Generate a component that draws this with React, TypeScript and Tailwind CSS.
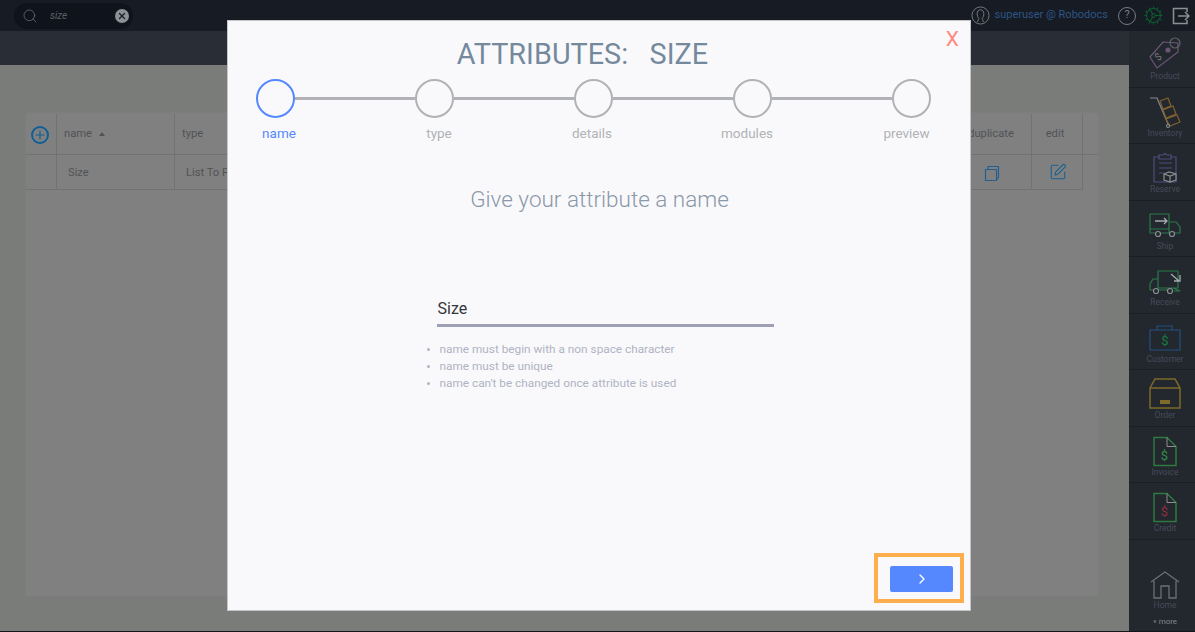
import { ReactNode } from "react";
import { ChevronRight, Cog, Plus, Search, SquarePen, X } from "lucide-react";

const steps = [
  { label: "name", width: "w-[34px]", gap: "" },
  { label: "type", width: "w-[26px]", gap: "ml-[130px]" },
  { label: "details", width: "w-[40px]", gap: "ml-[120px]" },
  { label: "modules", width: "w-[52px]", gap: "ml-[109px]" },
  { label: "preview", width: "w-[47px]", gap: "ml-[110px]" },
];

const rules = [
  "name must begin with a non space character",
  "name must be unique",
  "name can't be changed once attribute is used",
];

const NavItem = ({ label, children }: { label: string; children: ReactNode }) => (
  <div className="flex h-[56.5px] flex-col items-center border-b border-[#1b1f25] pl-[6px] pt-[5px]">
    <div className="h-[36px] w-[36px]">{children}</div>
    <span className="mt-[-2px] text-[8.5px] leading-[12px] text-[#454c5a]">{label}</span>
  </div>
);

const Doc = ({ color }: { color: string }) => (
  <svg viewBox="0 0 36 36" className="h-full w-full" fill="none">
    <path d="M7 5.500h13l9 9v19H7z" stroke="#2f7a3f" strokeWidth="1.5" />
    <path d="M20 5.500v9h9" stroke="#8c9094" strokeWidth="1" />
    <text x="17.500" y="28" textAnchor="middle" fontSize="13" fill={color} fontFamily="Roboto, sans-serif">$</text>
  </svg>
);

export default function App() {
  return (
    <div className="relative flex h-[632px] w-[1195px] flex-col overflow-hidden bg-[#7a7c7a] font-['Roboto',sans-serif]">
      {/* Top bar */}
      <header className="flex h-[31px] shrink-0 items-center bg-[#171b24] pl-[14px] pr-[5px]">
        <div className="flex h-[26px] w-[119px] items-center rounded-full bg-[#0f131b] pl-[8px] pr-[4px]">
          <Search size={16} strokeWidth={1.2} className="text-[#6a6f74]" />
          <span className="ml-[12px] text-[10px] italic text-[#5c6064]">size</span>
          <span className="ml-auto flex h-[14px] w-[14px] items-center justify-center rounded-full bg-[#8d9094]">
            <X size={10} strokeWidth={3} className="text-[#181c24]" />
          </span>
        </div>
        <div className="ml-auto flex items-center">
          <svg viewBox="0 0 20 20" className="h-[19px] w-[19px]" fill="none" stroke="#777c82" strokeWidth="1">
            <circle cx="10" cy="10" r="9" />
            <path d="M7 17c0-2 1-3 1.500-3.500C7 12 6.500 10 6.500 8c0-2.500 1.500-4 3.500-4s3.500 1.500 3.500 4c0 2-.5 4-2 5.500.5.500 1.500 1.500 1.500 3.500" />
          </svg>
          <span className="ml-[4px] text-[11px] text-[#2c5585]">superuser @ Robodocs</span>
          <span className="ml-[10px] flex h-[18px] w-[18px] items-center justify-center rounded-full border border-[#777c82] text-[11px] text-[#777c82]">?</span>
          <Cog size={21} strokeWidth={1.2} className="ml-[7px] text-[#0c5e2e]" />
          <svg viewBox="0 0 18 18" className="ml-[8px] h-[18px] w-[18px]" fill="none" stroke="#8b8f93" strokeWidth="1.500">
            <path d="M15 5V1.500H1.500v15H15V13M6 9h11M13 5l4 4-4 4" />
          </svg>
        </div>
      </header>

      <div className="flex min-h-0 flex-1">
        <div className="flex min-w-0 flex-1 flex-col">
          <div className="h-[34px] shrink-0 bg-[#292d35]" />
          {/* Table panel behind the dialog */}
          <main className="flex-1 pb-[34px] pl-[25px] pr-[30px] pt-[47px]">
            <div className="h-full rounded-[3px] border border-[#7c7d7c] bg-[#808080] text-[11.2px] text-[#505356]">
              <div className="flex h-[42px] border-b border-[#717272] pt-px">
                <div className="flex w-[31px] items-center justify-center border-r border-[#717272] pr-[2px] pt-[2px]">
                  <span className="flex h-[18px] w-[18px] items-center justify-center rounded-full border-2 border-[#0f5f96]">
                    <Plus size={14} strokeWidth={2} className="text-[#0f5f96]" />
                  </span>
                </div>
                <div className="flex w-[118px] items-center border-r border-[#717272] pl-[7px]">
                  name <span className="ml-[7px] h-0 w-0 border-x-[3.5px] border-b-[4px] border-x-transparent border-b-[#505356]" />
                </div>
                <div className="flex flex-1 items-center pl-[7px]">type</div>
                <div className="flex w-[81px] items-center justify-center border-r border-[#717272]">duplicate</div>
                <div className="flex w-[51px] items-center justify-center border-r border-[#717272] pr-[4px]">edit</div>
                <div className="w-[15px]" />
              </div>
              <div className="flex h-[35px]">
                <div className="w-[31px] border-b border-r border-[#717272]" />
                <div className="flex w-[118px] items-center border-b border-r border-[#717272] pl-[11px] pt-[3px]">Size</div>
                <div className="flex flex-1 items-center border-b border-[#717272] pl-[11px] pt-[3px]">List To Pick</div>
                <div className="flex w-[81px] items-center justify-center border-b border-r border-[#717272] pl-[2px] pt-[2px]">
                  <svg viewBox="0 0 16 17" className="h-[17px] w-[16px]" fill="none" stroke="#24608f" strokeWidth="1.200">
                    <path d="M1.500 4.500h11v11h-11zM4 4V1.500h10.500v11L12.500 15" />
                  </svg>
                </div>
                <div className="flex w-[51px] items-center justify-center border-b border-r border-[#717272] pl-[2px]">
                  <SquarePen size={18} strokeWidth={1.4} className="text-[#17608f]" />
                </div>
                <div className="w-[15px]" />
              </div>
            </div>
          </main>
        </div>

        {/* Right module bar */}
        <aside className="flex w-[66px] shrink-0 flex-col bg-[#23272e]">
          <NavItem label="Product">
            <svg viewBox="0 0 36 36" className="h-full w-full" fill="none" stroke="#6d5678" strokeWidth="1.200">
              <path d="M3 21L16 6l15 1v9L10 32z" />
              <circle cx="21" cy="14" r="2" fill="#6d5678" />
              <circle cx="28" cy="7" r="5" stroke="#5f6267" />
              <text x="12" y="24" fontSize="10" fill="#75787c" stroke="none" transform="rotate(-40 12 22)" textAnchor="middle" fontFamily="Roboto, sans-serif">$</text>
            </svg>
          </NavItem>
          <NavItem label="Inventory">
            <svg viewBox="0 0 36 36" className="h-full w-full" fill="none" strokeWidth="1.200">
              <path d="M3 5h7l11 26" stroke="#85898d" />
              <path d="M13 8l8-3 3 8-8 3zM16 17l10-4 3 8-10 4zM19 26l11-4 3 7-10 4z" stroke="#80602e" />
              <circle cx="21" cy="33" r="1.500" stroke="#85898d" />
            </svg>
          </NavItem>
          <NavItem label="Reserve">
            <svg viewBox="0 0 36 36" className="h-full w-full" fill="none" strokeWidth="1.200">
              <path d="M12 8H7v25h22V8h-5" stroke="#4d4f7a" />
              <path d="M12 10V6h4l2-1.500L20 6h4v4z" stroke="#4d4f7a" />
              <path d="M12 14h13M12 19h13M12 24h5" stroke="#4d4f7a" />
              <path d="M17 25l5-2 7 2v6l-6 2-6-2zM17 25l6 2 6-2M23 27v6" stroke="#8a8e92" fill="#23272e" />
            </svg>
          </NavItem>
          <NavItem label="Ship">
            <svg viewBox="0 0 36 36" className="h-full w-full" fill="none" strokeWidth="1.200">
              <path d="M3 8h19v15H3zM22 16h7l4 5v6h-5M8 27H3v-4M14 27h8v-4" stroke="#2c7a4b" />
              <circle cx="11" cy="28" r="2.500" stroke="#8a8f94" />
              <circle cx="25" cy="28" r="2.500" stroke="#8a8f94" />
              <path d="M8 15h12M17 12l3 3-3 3" stroke="#a7abae" strokeWidth="1.300" />
            </svg>
          </NavItem>
          <NavItem label="Receive">
            <svg viewBox="0 0 36 36" className="h-full w-full" fill="none" strokeWidth="1.200">
              <path d="M11 9h20v17H11zM11 17H6l-3 5v6h3M12 28h8M26 26l7 3h-6" stroke="#2c7a4b" />
              <circle cx="9" cy="29" r="2.500" stroke="#8a8f94" />
              <circle cx="23" cy="29" r="2.500" stroke="#8a8f94" />
              <path d="M24 12l8 7M33 13v6h-6" stroke="#a7abae" strokeWidth="1.300" />
            </svg>
          </NavItem>
          <NavItem label="Customer">
            <svg viewBox="0 0 36 36" className="h-full w-full" fill="none" strokeWidth="1.200">
              <path d="M3 11h30v20H3z" stroke="#22517f" />
              <path d="M10 11V7h15v4" stroke="#22517f" />
              <text x="18" y="26" textAnchor="middle" fontSize="13" fill="#12803c" fontFamily="Roboto, sans-serif">$</text>
            </svg>
          </NavItem>
          <NavItem label="Order">
            <svg viewBox="0 0 36 36" className="h-full w-full" fill="none" stroke="#7f6a2a" strokeWidth="1.500">
              <path d="M3 13L8 4h20l5 9v20H3zM3 13h30" />
              <path d="M13 25h10v4H13z" fill="#7f6a2a" strokeWidth="0" />
            </svg>
          </NavItem>
          <NavItem label="Invoice">
            <Doc color="#2f8f4a" />
          </NavItem>
          <NavItem label="Credit">
            <Doc color="#8f2f3f" />
          </NavItem>
          <div className="mt-auto flex flex-col items-center pb-[4px] pl-[6px]">
            <svg viewBox="0 0 30 28" className="h-[28px] w-[30px]" fill="none" stroke="#6c7076" strokeWidth="1.300">
              <path d="M1 11L15 1l14 10M4 10v17h7V15h8v12h7V10" />
            </svg>
            <span className="mt-px text-[8.5px] leading-[10px] text-[#454c5a]">Home</span>
            <span className="mt-[7px] text-[8px] leading-[10px] text-[#83878c]">« more</span>
          </div>
        </aside>
      </div>
      <div className="h-px shrink-0 bg-[#12151a]" />

      {/* Dialog */}
      <section className="absolute left-[227px] top-[20px] flex h-[591px] w-[744px] flex-col items-center bg-[#f9f9fc] text-[#8b98a8] shadow-[inset_0_0_0_1px_#c4c5c7]">
        <span className="absolute right-[12px] top-[4px] text-[21px] text-[#ff8a80]">X</span>
        <h1 className="mr-[33px] mt-[18px] whitespace-pre text-[28.8px] leading-[32px] text-[#75899c]">ATTRIBUTES:   SIZE</h1>

        <div className="ml-[29px] mt-[9px] flex w-[675px] items-center self-start">
          {steps.map((step, i) => (
            <div key={step.label} className="contents">
              {i > 0 && <div className="h-[2.5px] flex-1 bg-[#b0b2b5]" />}
              <div className={`h-[39px] w-[39px] rounded-full border-[2.5px] ${i === 0 ? "border-[#5588ff]" : "border-[#b0b2b5]"}`} />
            </div>
          ))}
        </div>

        <div className="mt-[7px] flex self-start pl-[35px] text-[13.5px] leading-[17px] text-[#b0b2b5]">
          {steps.map((step, i) => (
            <span key={step.label} className={`${step.width} ${step.gap} whitespace-nowrap text-center ${i === 0 ? "text-[#5588ff]" : ""}`}>
              {step.label}
            </span>
          ))}
        </div>

        <h2 className="ml-px mt-[42px] text-[22.5px] font-light leading-[30px] text-[#8b98a8]">Give your attribute a name</h2>

        <div className="ml-[12px] mt-[83px] w-[337px] self-center border-b-[3px] border-[#9ea1b5] pb-[3px] text-[16px] leading-[24px] text-[#33363b]">
          <span className="ml-px">Size</span>
        </div>

        <ul className="ml-[12px] mt-[14px] w-[337px] self-center pl-[3px] text-[11.8px] leading-[17px] text-[#b0b3c3]">
          {rules.map((rule) => (
            <li key={rule} className="flex items-center">
              <span className="ml-[-13px] mr-[10px] h-[3px] w-[3px] rounded-full bg-[#b0b3c3]" />
              {rule}
            </li>
          ))}
        </ul>

        <div className="mb-[19px] mt-auto flex w-full justify-end pr-[18px]">
          <button className="flex h-[26px] w-[63px] items-center justify-center rounded-[2px] bg-[#5588ff] text-white">
            <ChevronRight size={16} strokeWidth={2} />
          </button>
        </div>
      </section>

      {/* Annotation box */}
      <div className="absolute left-[874px] top-[553px] h-[50px] w-[90px] border-4 border-[#ffae4d]" />
    </div>
  );
}
